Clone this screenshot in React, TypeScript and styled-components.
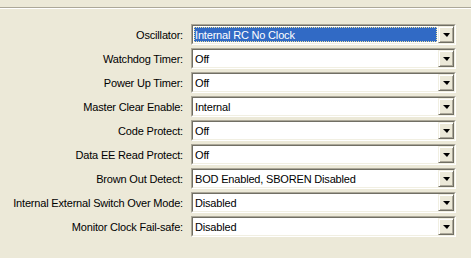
import { Fragment } from "react";
import styled, { createGlobalStyle } from "styled-components";

const GlobalStyle = createGlobalStyle`
	html, body {
		margin: 0;
		padding: 0;
		background: #ece9d8;
	}
	body {
		font-family: "Liberation Sans", Arial, sans-serif;
		font-size: 11px;
		color: #000;
	}
`;

const Page = styled.div`
	width: 471px;
	height: 258px;
	padding-top: 7px;
	box-sizing: border-box;
	overflow: hidden;
`;

const Separator = styled.div`
	height: 1px;
	background: #aca899;
	border-bottom: 1px solid #ffffff;
`;

const Form = styled.div`
	display: grid;
	grid-template-columns: 183px 265px;
	grid-auto-rows: 21px;
	column-gap: 8px;
	row-gap: 3px;
	margin-top: 15px;
`;

const Label = styled.div`
	display: flex;
	align-items: center;
	justify-content: flex-end;
	white-space: nowrap;
	letter-spacing: -0.18px;
	padding-top: 1px;
`;

const Combo = styled.div`
	display: flex;
	box-sizing: border-box;
	height: 21px;
	border: 1px solid;
	border-color: #aca899 #ffffff #ffffff #aca899;
`;

const Field = styled.div`
	display: flex;
	flex: 1;
	min-width: 0;
	border: 1px solid;
	border-color: #716f64 #f1efe2 #f1efe2 #716f64;
	background: #ffffff;
`;

const Value = styled.div<{ $selected?: boolean }>`
	flex: 1;
	min-width: 0;
	display: flex;
	align-items: center;
	margin: 1px 1px 1px 1px;
	padding: 0 0 0 1px;
	white-space: nowrap;
	letter-spacing: -0.18px;
	box-sizing: border-box;
	background: ${(p) => (p.$selected ? "#316ac5" : "transparent")};
	color: ${(p) => (p.$selected ? "#ffffff" : "#000000")};
	outline: ${(p) => (p.$selected ? "1px dotted #e8e0a0" : "none")};
	outline-offset: -1px;
`;

const Button = styled.div`
	flex: 0 0 16px;
	width: 16px;
	box-sizing: border-box;
	display: flex;
	align-items: center;
	justify-content: center;
	background: #ece9d8;
	border: 1px solid;
	border-color: #f1efe2 #716f64 #716f64 #f1efe2;
	box-shadow: inset 1px 1px 0 #ffffff, inset -1px -1px 0 #aca899;
`;

const Arrow = styled.div`
	width: 0;
	height: 0;
	border-left: 4px solid transparent;
	border-right: 3px solid transparent;
	border-top: 4px solid #000;
	margin-top: 1px;
`;

const rows: { label: string; value: string; selected?: boolean }[] = [
	{ label: "Oscillator:", value: "Internal RC No Clock", selected: true },
	{ label: "Watchdog Timer:", value: "Off" },
	{ label: "Power Up Timer:", value: "Off" },
	{ label: "Master Clear Enable:", value: "Internal" },
	{ label: "Code Protect:", value: "Off" },
	{ label: "Data EE Read Protect:", value: "Off" },
	{ label: "Brown Out Detect:", value: "BOD Enabled, SBOREN Disabled" },
	{ label: "Internal External Switch Over Mode:", value: "Disabled" },
	{ label: "Monitor Clock Fail-safe:", value: "Disabled" },
];

export default function App() {
	return (
		<>
			<GlobalStyle />
			<Page>
				<Separator />
				<Form>
					{rows.map((row) => (
						<Fragment key={row.label}>
							<Label>{row.label}</Label>
							<Combo>
								<Field>
									<Value $selected={row.selected}>{row.value}</Value>
									<Button>
										<Arrow />
									</Button>
								</Field>
							</Combo>
						</Fragment>
					))}
				</Form>
			</Page>
		</>
	);
}
